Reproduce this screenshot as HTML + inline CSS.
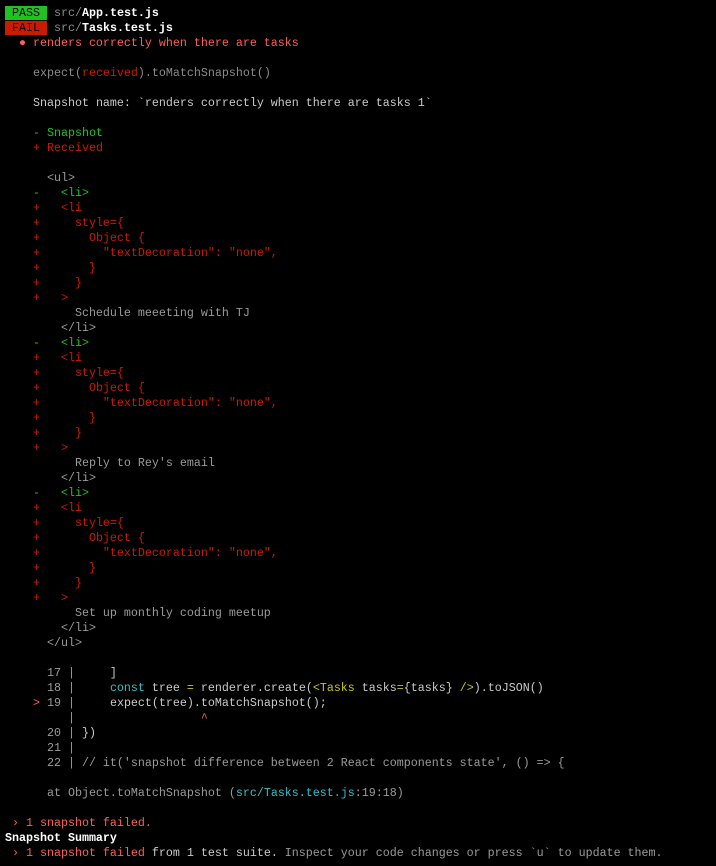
<!DOCTYPE html>
<html><head><meta charset="utf-8"><style>
html,body{margin:0;padding:0;background:#000;}
body{width:716px;height:866px;overflow:hidden;}
pre{margin:0;padding:6px 0 0 5px;font-family:"Liberation Mono","DejaVu Sans Mono",monospace;font-size:11.67px;line-height:15px;color:#9a9a9a;white-space:pre;}
.g{color:#1fc21f}.r{color:#c91b00}.R{color:#ff5f57}.w{color:#fff;font-weight:bold}
.l{color:#c9c9c9}.c{color:#2fc0c8}.y{color:#c8c41a}.d{color:#8a8a8a}
.pass{background:#1fc21f;color:#000}.fail{background:#c91b00;color:#000}
</style></head><body><pre><span class="pass"> PASS </span> <span class="d">src/</span><span class="w">App.test.js</span>
<span class="fail"> FAIL </span> <span class="d">src/</span><span class="w">Tasks.test.js</span>
<span class="R">  ● renders correctly when there are tasks</span>

    <span class="d">expect(</span><span class="r">received</span><span class="d">).toMatchSnapshot()</span>

    <span class="l">Snapshot name: `renders correctly when there are tasks 1`</span>

    <span class="g">- Snapshot</span>
    <span class="r">+ Received</span>

      &lt;ul&gt;
    <span class="g">-   &lt;li&gt;</span>
    <span class="r">+   &lt;li</span>
    <span class="r">+     style={</span>
    <span class="r">+       Object {</span>
    <span class="r">+         "textDecoration": "none",</span>
    <span class="r">+       }</span>
    <span class="r">+     }</span>
    <span class="r">+   &gt;</span>
          Schedule meeeting with TJ
        &lt;/li&gt;
    <span class="g">-   &lt;li&gt;</span>
    <span class="r">+   &lt;li</span>
    <span class="r">+     style={</span>
    <span class="r">+       Object {</span>
    <span class="r">+         "textDecoration": "none",</span>
    <span class="r">+       }</span>
    <span class="r">+     }</span>
    <span class="r">+   &gt;</span>
          Reply to Rey's email
        &lt;/li&gt;
    <span class="g">-   &lt;li&gt;</span>
    <span class="r">+   &lt;li</span>
    <span class="r">+     style={</span>
    <span class="r">+       Object {</span>
    <span class="r">+         "textDecoration": "none",</span>
    <span class="r">+       }</span>
    <span class="r">+     }</span>
    <span class="r">+   &gt;</span>
          Set up monthly coding meetup
        &lt;/li&gt;
      &lt;/ul&gt;

      17 | <span class="l">    ]</span>
      18 | <span class="l">    </span><span class="c">const</span><span class="l"> tree </span><span class="y">=</span><span class="l"> renderer.create(</span><span class="y">&lt;Tasks</span><span class="l"> tasks</span><span class="y">=</span><span class="l">{tasks} </span><span class="y">/&gt;</span><span class="l">).toJSON()</span>
    <span class="R">&gt;</span> 19 | <span class="l">    expect(tree).toMatchSnapshot();</span>
         | <span class="R">                 ^</span>
      20 | <span class="l">})</span>
      21 |
      22 | // it('snapshot difference between 2 React components state', () =&gt; {

      at Object.toMatchSnapshot (<span class="c">src/Tasks.test.js</span>:19:18)

<span class="R"> › 1 snapshot failed.</span>
<span class="w">Snapshot Summary</span>
<span class="R"> › 1 snapshot failed</span><span class="l"> from 1 test suite.</span> Inspect your code changes or press `u` to update them.
</pre></body></html>
